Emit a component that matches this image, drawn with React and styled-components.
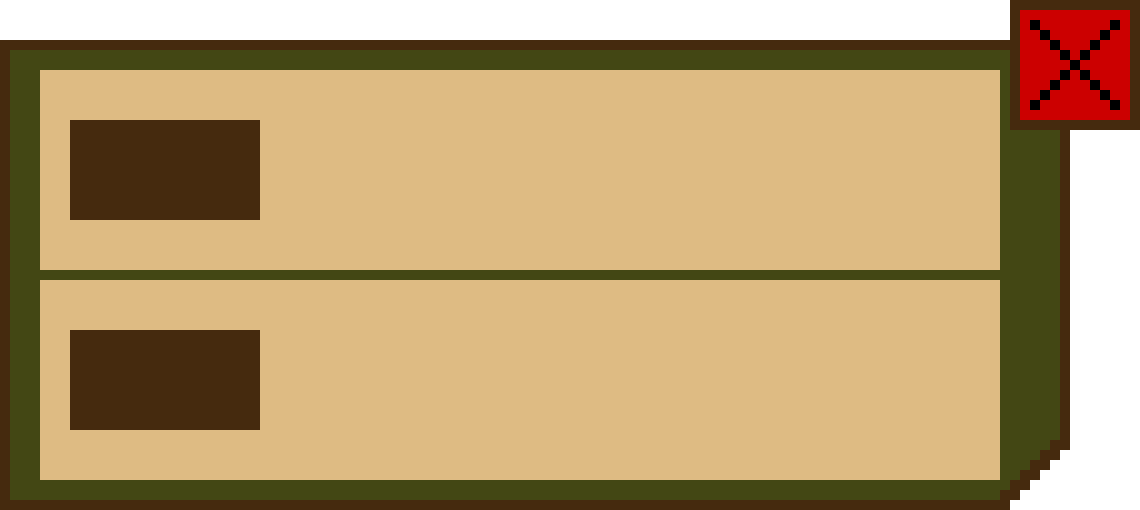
import React from "react";
import styled, { createGlobalStyle } from "styled-components";

const BROWN = "#452a0e";
const OLIVE = "#434714";
const TAN = "#debb83";
const RED = "#cc0000";

const Global = createGlobalStyle`
  html, body {
    margin: 0;
    padding: 0;
    background: #ffffff;
    font-family: "Liberation Sans", Arial, sans-serif;
  }
`;

const Stage = styled.div`
  position: relative;
  width: 1140px;
  height: 510px;
  padding-top: 40px;
  box-sizing: border-box;
`;

/* Outer frame: dark brown rim with a stepped, pixel-art bevel at the bottom right */
const Frame = styled.div`
  width: 1070px;
  height: 470px;
  box-sizing: border-box;
  padding: 10px;
  background: ${BROWN};
  clip-path: polygon(
    0 0, 1070px 0, 1070px 410px,
    1060px 410px, 1060px 420px,
    1050px 420px, 1050px 430px,
    1040px 430px, 1040px 440px,
    1030px 440px, 1030px 450px,
    1020px 450px, 1020px 460px,
    1010px 460px, 1010px 470px,
    0 470px
  );
`;

const Body = styled.div`
  width: 1050px;
  height: 450px;
  box-sizing: border-box;
  padding: 20px 60px 20px 30px;
  background: ${OLIVE};
  display: flex;
  flex-direction: column;
  gap: 10px;
  clip-path: polygon(
    0 0, 1050px 0, 1050px 390px,
    1040px 390px, 1040px 400px,
    1030px 400px, 1030px 410px,
    1020px 410px, 1020px 420px,
    1010px 420px, 1010px 430px,
    1000px 430px, 1000px 440px,
    990px 440px, 990px 450px,
    0 450px
  );
`;

const Slot = styled.div`
  height: 200px;
  background: ${TAN};
  box-sizing: border-box;
  padding: 50px 30px;
  display: flex;
  align-items: flex-start;
`;

const Icon = styled.div`
  width: 190px;
  height: 100px;
  background: ${BROWN};
`;

const CloseButton = styled.button`
  position: absolute;
  top: 0;
  left: 1010px;
  width: 130px;
  height: 130px;
  box-sizing: border-box;
  margin: 0;
  padding: 0;
  border: 10px solid ${BROWN};
  background: ${RED};
  display: block;
  cursor: pointer;

  svg {
    display: block;
  }
`;

const steps = [1, 2, 3, 4, 5, 6, 7, 8, 9];

function PixelCross() {
  return (
    <svg width="110" height="110" viewBox="0 0 110 110" shapeRendering="crispEdges">
      {steps.map((i) => (
        <rect key={`a${i}`} x={i * 10} y={i * 10} width="10" height="10" fill="#000" />
      ))}
      {steps.map((i) => (
        <rect key={`b${i}`} x={100 - i * 10} y={i * 10} width="10" height="10" fill="#000" />
      ))}
    </svg>
  );
}

export default function App() {
  return (
    <>
      <Global />
      <Stage>
        <Frame>
          <Body>
            <Slot>
              <Icon />
            </Slot>
            <Slot>
              <Icon />
            </Slot>
          </Body>
        </Frame>
        <CloseButton aria-label="Close">
          <PixelCross />
        </CloseButton>
      </Stage>
    </>
  );
}
